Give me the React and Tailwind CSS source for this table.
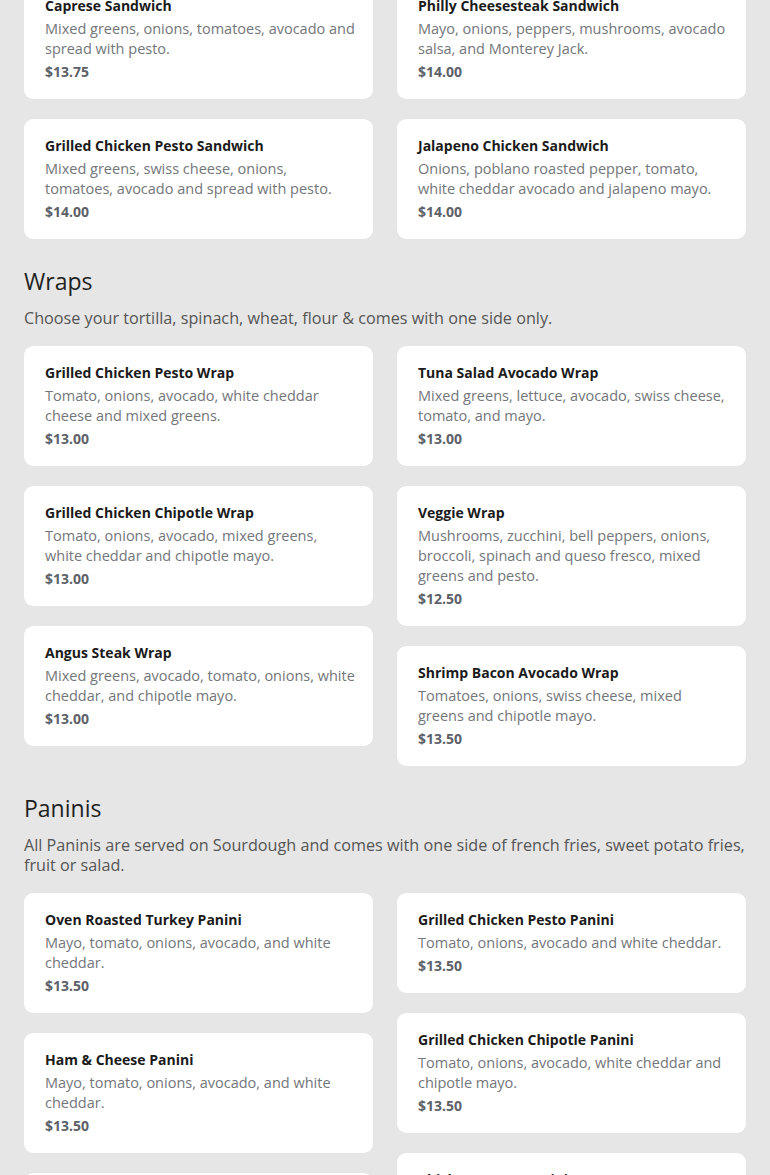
const sections = [
  {
    title: null,
    left: [
      { name: 'Caprese Sandwich', desc: 'Mixed greens, onions, tomatoes, avocado and spread with pesto.', price: '$13.75' },
      { name: 'Grilled Chicken Pesto Sandwich', desc: 'Mixed greens, swiss cheese, onions, tomatoes, avocado and spread with pesto.', price: '$14.00' },
    ],
    right: [
      { name: 'Philly Cheesesteak Sandwich', desc: 'Mayo, onions, peppers, mushrooms, avocado salsa, and Monterey Jack.', price: '$14.00' },
      { name: 'Jalapeno Chicken Sandwich', desc: 'Onions, poblano roasted pepper, tomato, white cheddar avocado and jalapeno mayo.', price: '$14.00' },
    ],
  },
  {
    title: 'Wraps',
    note: 'Choose your tortilla, spinach, wheat, flour & comes with one side only.',
    left: [
      { name: 'Grilled Chicken Pesto Wrap', desc: 'Tomato, onions, avocado, white cheddar cheese and mixed greens.', price: '$13.00' },
      { name: 'Grilled Chicken Chipotle Wrap', desc: 'Tomato, onions, avocado, mixed greens, white cheddar and chipotle mayo.', price: '$13.00' },
      { name: 'Angus Steak Wrap', desc: 'Mixed greens, avocado, tomato, onions, white cheddar, and chipotle mayo.', price: '$13.00' },
    ],
    right: [
      { name: 'Tuna Salad Avocado Wrap', desc: 'Mixed greens, lettuce, avocado, swiss cheese, tomato, and mayo.', price: '$13.00' },
      { name: 'Veggie Wrap', desc: 'Mushrooms, zucchini, bell peppers, onions, broccoli, spinach and queso fresco, mixed greens and pesto.', price: '$12.50' },
      { name: 'Shrimp Bacon Avocado Wrap', desc: 'Tomatoes, onions, swiss cheese, mixed greens and chipotle mayo.', price: '$13.50' },
    ],
  },
  {
    title: 'Paninis',
    note: 'All Paninis are served on Sourdough and comes with one side of french fries, sweet potato fries, fruit or salad.',
    left: [
      { name: 'Oven Roasted Turkey Panini', desc: 'Mayo, tomato, onions, avocado, and white cheddar.', price: '$13.50' },
      { name: 'Ham & Cheese Panini', desc: 'Mayo, tomato, onions, avocado, and white cheddar.', price: '$13.50' },
      { name: 'Caprese Panini', desc: 'Mozzarella, tomato, basil and pesto.', price: '$13.00' },
    ],
    right: [
      { name: 'Grilled Chicken Pesto Panini', desc: 'Tomato, onions, avocado and white cheddar.', price: '$13.50' },
      { name: 'Grilled Chicken Chipotle Panini', desc: 'Tomato, onions, avocado, white cheddar and chipotle mayo.', price: '$13.50' },
      { name: 'Chicken Bacon Panini', desc: 'Bacon, tomato, onions, avocado and white cheddar.', price: '$13.50' },
    ],
  },
];

const Card = ({ item }) => (
  <div className="bg-white rounded-[9px] pl-[21px] pr-[18px] pt-[17px] pb-[17px] shadow-[0_0_1px_rgba(0,0,0,0.06)]">
    <h3 className="text-[14px] leading-[20px] font-bold text-[#1b1b1b]">{item.name}</h3>
    <p className="mt-[3px] text-[14.5px] leading-[20px] text-[#73767a]">{item.desc}</p>
    <p className="mt-[3px] text-[14px] leading-[20px] font-bold text-[#5d6168]">{item.price}</p>
  </div>
);

const App = () => {
  return (
    <div className="min-h-screen bg-[#e6e6e6] px-6 pb-10 overflow-hidden font-['Open_Sans',sans-serif]">
      <div className="-mt-[21px]">
        {sections.map((section, i) => (
          <section key={i} className={i > 0 ? 'mt-[26px]' : ''}>
            {section.title && (
              <div className="mb-[18px]">
                <h2 className="text-[23px] leading-[32px] text-[#1f1f1f]">{section.title}</h2>
                <p className="mt-[11px] text-[16.2px] leading-[20px] text-[#555]">{section.note}</p>
              </div>
            )}
            <div className="grid grid-cols-2 gap-6 items-start">
              <div className="flex flex-col gap-5">
                {section.left.map((item) => <Card key={item.name} item={item} />)}
              </div>
              <div className="flex flex-col gap-5">
                {section.right.map((item) => <Card key={item.name} item={item} />)}
              </div>
            </div>
          </section>
        ))}
      </div>
    </div>
  );
};

export default App;
